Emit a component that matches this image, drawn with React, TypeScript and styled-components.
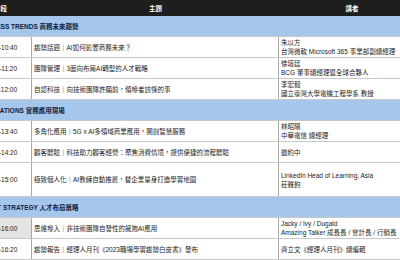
import React from 'react';
import styled, { createGlobalStyle } from 'styled-components';

const GlobalStyle = createGlobalStyle`
  html, body {
    margin: 0;
    padding: 0;
    background: #ffffff;
    overflow: hidden;
  }
  body {
    font-family: 'Liberation Sans', 'Noto Sans CJK TC', sans-serif;
  }
`;

// the reference is a crop of a wider table, so it starts left of the frame
const Table = styled.div`
  width: 456px;
  margin-left: -31px;
  font-size: 6.5px;
  color: #222222;
`;

const Row = styled.div<{ $tall?: boolean }>`
  display: grid;
  grid-template-columns: 63px 247px 146px;
  min-height: ${(p) => (p.$tall ? '34px' : '21px')};
  border-bottom: 1px solid #c9c9c9;
  box-sizing: border-box;
`;

const HeaderRow = styled.div`
  display: grid;
  grid-template-columns: 63px 247px 146px;
  height: 16px;
  background: #1e1e1e;
  color: #ffffff;
  font-weight: bold;
`;

const HeaderCell = styled.div`
  display: flex;
  align-items: center;
  justify-content: center;
`;

const Section = styled.div`
  display: flex;
  align-items: center;
  height: 20px;
  padding-left: 7px;
  background: #a5c7eb;
  color: #13213d;
  font-weight: bold;
  border-bottom: 1px solid #c9c9c9;
`;

const Cell = styled.div<{ $center?: boolean; $shade?: boolean }>`
  display: flex;
  flex-direction: column;
  justify-content: center;
  align-items: ${(p) => (p.$center ? 'center' : 'flex-start')};
  padding: 1px 2px;
  line-height: 9px;
  border-right: 1px solid #a8a8a8;
  background: ${(p) => (p.$shade ? '#e4e4e4' : 'transparent')};
  white-space: nowrap;
`;

type Session = {
  time: string;
  topic: string;
  speaker: string[];
  tall?: boolean;
  shade?: boolean;
};

type Block = { title: string; sessions: Session[] };

const agenda: Block[] = [
  {
    title: 'BUSINESS TRENDS 商務未來趨勢',
    sessions: [
      {
        time: '10:00-10:40',
        topic: '趨勢話題｜AI如何影響商務未來？',
        speaker: ['朱以方', '台灣微軟 Microsoft 365 事業部副總經理'],
      },
      {
        time: '10:40-11:20',
        topic: '團隊管理｜3面向布局AI轉型的人才戰略',
        speaker: ['徐瑄廷', 'BCG 董事總經理暨全球合夥人'],
      },
      {
        time: '11:20-12:00',
        topic: '自認科技｜向技術團隊許願前，領導者該懂的事',
        speaker: ['李宏毅', '國立臺灣大學電機工程學系 教授'],
      },
    ],
  },
  {
    title: 'APPLICATIONS 實務應用現場',
    sessions: [
      {
        time: '13:00-13:40',
        topic: '多角化應用｜5G x AI多領域商業應用，開創智慧服務',
        speaker: ['林昭陽', '中華電信 總經理'],
      },
      {
        time: '13:40-14:20',
        topic: '顧客體驗｜科技助力顧客經營：聚焦消費情境，提供便捷的流程體驗',
        speaker: ['邀約中'],
      },
      {
        time: '14:20-15:00',
        topic: '極致個人化｜AI教練自動推薦，替企業量身打造學習地圖',
        speaker: ['LinkedIn Head of Learning, Asia', '莊雅鈞'],
        tall: true,
      },
    ],
  },
  {
    title: 'TALENT STRATEGY 人才布局策略',
    sessions: [
      {
        time: '15:20-16:00',
        topic: '思維導入｜非技術團隊自發性的擁抱AI應用',
        speaker: ['Jacky / Ivy / Dugald', 'Amazing Talker 成長長 / 會計長 / 行銷長'],
        shade: true,
      },
      {
        time: '16:00-16:20',
        topic: '趨勢報告｜經理人月刊《2023職場學習趨勢白皮書》發布',
        speaker: ['齊立文《經理人月刊》總編輯'],
      },
    ],
  },
];

const App = (): JSX.Element => {
  return (
    <>
      <GlobalStyle />
      <Table>
        <HeaderRow>
          <HeaderCell>時段</HeaderCell>
          <HeaderCell>主題</HeaderCell>
          <HeaderCell>講者</HeaderCell>
        </HeaderRow>
        {agenda.map((block) => (
          <React.Fragment key={block.title}>
            <Section>{block.title}</Section>
            {block.sessions.map((s) => (
              <Row key={s.time} $tall={s.tall}>
                <Cell $center $shade={s.shade}>
                  {s.time}
                </Cell>
                <Cell>{s.topic}</Cell>
                <Cell>
                  {s.speaker.map((line) => (
                    <span key={line}>{line}</span>
                  ))}
                </Cell>
              </Row>
            ))}
          </React.Fragment>
        ))}
      </Table>
    </>
  );
};

export default App;
